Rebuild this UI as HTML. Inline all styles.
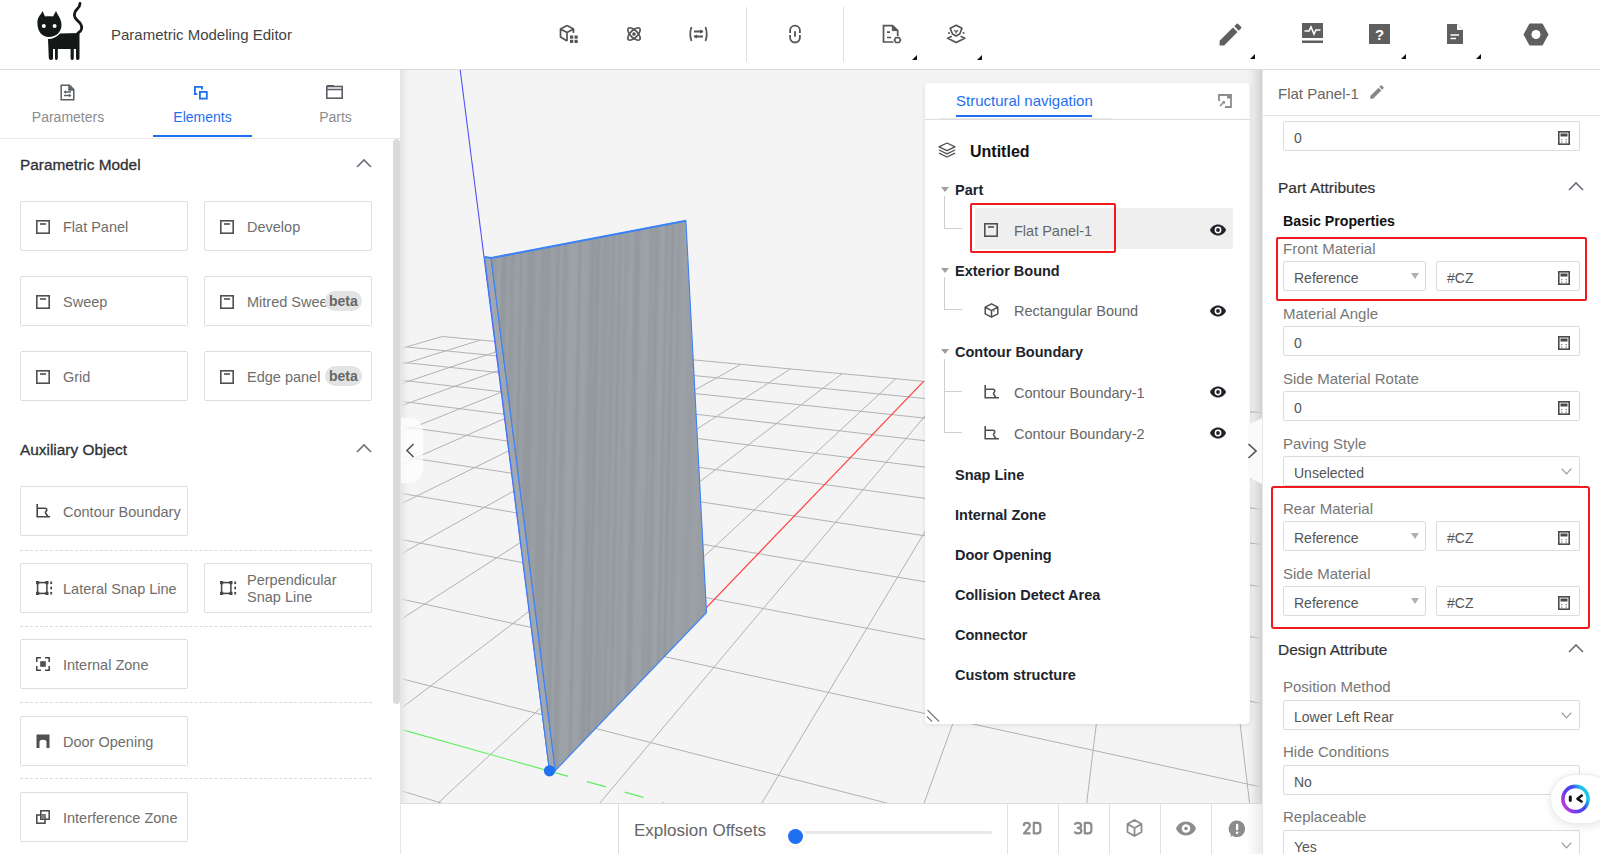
<!DOCTYPE html>
<html><head><meta charset="utf-8">
<style>
*{box-sizing:border-box;margin:0;padding:0}
html,body{width:1600px;height:854px;overflow:hidden;background:#fff;font-family:"Liberation Sans",sans-serif;color:#333}
.abs{position:absolute}
#hdr{position:absolute;left:0;top:0;width:1600px;height:70px;background:#fff;border-bottom:1px solid #dcdcdc}
#left{position:absolute;left:0;top:70px;width:401px;height:784px;background:#fff;border-right:1px solid #e4e4e4}
#view{position:absolute;left:401px;top:70px;width:861px;height:784px;background:#f4f4f4;overflow:hidden}
#right{position:absolute;left:1262px;top:70px;width:338px;height:784px;background:#fff}
.btn{position:absolute;height:50px;border:1px solid #dedede;border-radius:2px;background:#fff;font-size:14.5px;color:#6e6e6e}
.btn .t{position:absolute;left:42px;top:17px;white-space:nowrap}
.btn svg{position:absolute;left:15px;top:18px}
.sec{position:absolute;left:20px;font-size:15.4px;color:#2c3038}
.dash{position:absolute;left:20px;width:352px;border-top:1px dashed #dadada}
.beta{position:absolute;top:14px;height:20px;padding:0 4px;border-radius:10px;background:#e3e3e3;color:#666;font-weight:bold;font-size:14px;line-height:20px}
.lab{position:absolute;left:21px;font-size:15px;color:#777;white-space:nowrap}
.sect{position:absolute;left:16px;font-size:15.5px;color:#333;white-space:nowrap;-webkit-text-stroke:0.2px #333}
.inp{position:absolute;height:30px;border:1px solid #dcdcdc;border-radius:2px;background:#fff}
.inp .v{position:absolute;left:10px;top:7.5px;font-size:14px;color:#555;white-space:nowrap}
.tab{position:absolute;top:0;width:133px;height:68px;text-align:center;font-size:14.5px;color:#8c8c8c}
</style></head><body>
<div id="hdr">
<svg class="abs" style="left:0px;top:0px" width="90" height="64" viewBox="0 0 90 64">
<path fill="#141817" d="M37.5 24 C37 19 39 16 41 14 L42.5 11 L45 16.5 C47 16 51 16 53 16.5 L56 11 L58 15 C60 18 61.5 21 61.5 25 C61.5 32 56 37 49 37 C42 37 37.5 31 37.5 24 Z"/>
<path fill="#141817" d="M48 39 C53 39 57 37 60 33.5 L79.5 33 L79.5 58.5 Q79 60.3 77.5 60 Q76 59.8 76 58 L76 49 L73.8 49 L73.8 58.5 Q73 60.3 72 60 Q70.6 59.8 70.6 58 L70.6 49 L57.8 49 L57.8 58.5 Q57 60.3 56 60 Q55 59.8 55 58 L55 49 L53 49 L53 58.5 Q52 60.5 50.5 60 Q48.8 59.5 48.8 58 Z"/>
<path fill="none" stroke="#141817" stroke-width="2.8" stroke-linecap="round" d="M78 33 C82 31 83 27 80 23 C76 19 73 17 75 12 C76 9 80 8 80 3.5"/>
<circle cx="43.8" cy="26" r="2" fill="#fff"/><circle cx="54.6" cy="26" r="2" fill="#fff"/>
</svg>
<div class="abs" style="left:111px;top:26px;font-size:15px;color:#444;white-space:nowrap">Parametric Modeling Editor</div>
<!-- icons -->
<svg class="abs" style="left:559px;top:24px" width="21" height="21" viewBox="0 0 21 21" fill="none" stroke="#555" stroke-width="1.7" stroke-linejoin="round">
<path d="M8 1.5 L1.5 5 L1.5 13 L8 17 M8 1.5 L14.5 5 L8 8.5 L1.5 5 M8 8.5 L8 17 M14.5 5 L14.5 9"/>
<g fill="#555" stroke="none"><rect x="11" y="11.5" width="3.2" height="3.2"/><rect x="15.5" y="11.5" width="3.2" height="3.2"/><rect x="11" y="15.8" width="3.2" height="3.2"/><rect x="15.5" y="15.8" width="3.2" height="3.2"/></g>
</svg>
<svg class="abs" style="left:625px;top:25px" width="18" height="18" viewBox="0 0 18 18" fill="none" stroke="#555" stroke-width="1.7">
<ellipse cx="9" cy="9" rx="8" ry="3.6" transform="rotate(45 9 9)"/><ellipse cx="9" cy="9" rx="8" ry="3.6" transform="rotate(-45 9 9)"/><circle cx="9" cy="9" r="1" fill="#555"/>
</svg>
<svg class="abs" style="left:688px;top:26px" width="21" height="16" viewBox="0 0 21 16" fill="none" stroke="#555" stroke-width="1.8">
<path d="M3.5 1 Q1 8 3.5 15 M17.5 1 Q20 8 17.5 15"/><path d="M6 5.5 L15 5.5 M6 10.5 L15 10.5"/><path fill="#555" stroke="none" d="M12 3.5 L15.5 5.5 L12 7.5 Z M9 8.5 L5.5 10.5 L9 12.5 Z"/>
</svg>
<div class="abs" style="left:746px;top:7px;width:1px;height:55px;background:#e0e0e0"></div>
<svg class="abs" style="left:788px;top:24px" width="14" height="20" viewBox="0 0 14 20" fill="none" stroke="#555" stroke-width="1.8"><path d="M2.1 9 L2.1 6.6 A4.9 4.9 0 0 1 11.9 6.6 L11.9 9 M2.1 11 L2.1 13.6 A4.9 4.9 0 0 0 11.9 13.6 L11.9 11 M7 7.2 L7 12.8"/></svg>
<div class="abs" style="left:843px;top:7px;width:1px;height:55px;background:#e0e0e0"></div>
<svg class="abs" style="left:882px;top:24px" width="20" height="20" viewBox="0 0 20 20" fill="none" stroke="#555" stroke-width="1.7"><path d="M11.5 18 L1.5 18 L1.5 1.6 L10.5 1.6 L15.7 6.5 L15.7 12"/><path d="M10.3 2 L10.3 6.6 L15.3 6.6 Z" fill="#555" stroke-width="1"/><path d="M5 8.2 L8 8.2 M5 13.5 L9.2 13.5"/><path d="M13.9 13.6 L17.1 13.6 L18.6 16 L17.1 18.5 L13.9 18.5 L12.4 16 Z" stroke-width="1.6"/></svg>
<svg class="abs" style="left:946px;top:24px" width="20" height="20" viewBox="0 0 20 20" fill="none" stroke="#555" stroke-width="1.7" stroke-linejoin="round"><path d="M10.2 1.3 L16 4.2 L13.7 10 L10.1 12 L6.5 10 L4.2 4.2 Z"/><path d="M8.3 6.3 L10.2 7.8 L12.1 6.3 M10.2 7.8 L10.2 9.6" stroke-width="1.3"/><circle cx="3" cy="9" r="1" fill="#555" stroke="none"/><circle cx="17.5" cy="9" r="1" fill="#555" stroke="none"/><path d="M5.8 12.3 L1.6 14.3 L10.2 18.4 L18.8 14.3 L14.6 12.3"/></svg>
<svg class="abs" style="left:912px;top:55px" width="5" height="5"><path d="M5 0 L5 5 L0 5 Z" fill="#111"/></svg>
<svg class="abs" style="left:977px;top:55px" width="5" height="5"><path d="M5 0 L5 5 L0 5 Z" fill="#111"/></svg>
<!-- right icons -->
<svg class="abs" style="left:1216px;top:20px" width="29" height="29" viewBox="0 0 24 24"><path fill="#5f5f5f" d="M3 17.25V21h3.75L17.81 9.94l-3.75-3.75L3 17.25zM20.71 7.04a1 1 0 0 0 0-1.41l-2.34-2.34a1 1 0 0 0-1.41 0l-1.83 1.83 3.75 3.75 1.83-1.83z"/></svg>
<svg class="abs" style="left:1301px;top:23px" width="23" height="21" viewBox="0 0 23 21"><rect x="1" y="0" width="21" height="15" fill="#5f5f5f"/><rect x="1" y="17.5" width="21" height="2.5" fill="#5f5f5f"/><path d="M3.5 8 L8 8 L10 4 L13 11 L15 7 L19.5 7" fill="none" stroke="#fff" stroke-width="1.6"/></svg>
<svg class="abs" style="left:1369px;top:24px" width="21" height="21" viewBox="0 0 21 21"><rect x="0" y="0" width="21" height="20" fill="#5f5f5f"/><text x="10.5" y="16" text-anchor="middle" font-family="Liberation Sans" font-weight="bold" font-size="15" fill="#fff">?</text></svg>
<svg class="abs" style="left:1447px;top:24px" width="16" height="20" viewBox="0 0 16 20"><path d="M0 0 L10 0 L16 6 L16 20 L0 20 Z" fill="#5f5f5f"/><path d="M10 0 L10 6 L16 6" fill="#fff"/><path d="M3.5 11 L12 11 M3.5 14.5 L9 14.5" stroke="#fff" stroke-width="1.5"/></svg>
<svg class="abs" style="left:1523px;top:23px" width="26" height="23" viewBox="0 0 26 23"><path d="M6.5 0.5 L19.5 0.5 L25.5 11.5 L19.5 22.5 L6.5 22.5 L0.5 11.5 Z" fill="#5f5f5f"/><circle cx="13" cy="11.5" r="4.5" fill="#fff"/></svg>
<svg class="abs" style="left:1250px;top:54px" width="5" height="5"><path d="M5 0 L5 5 L0 5 Z" fill="#111"/></svg>
<svg class="abs" style="left:1401px;top:54px" width="5" height="5"><path d="M5 0 L5 5 L0 5 Z" fill="#111"/></svg>
<svg class="abs" style="left:1476px;top:54px" width="5" height="5"><path d="M5 0 L5 5 L0 5 Z" fill="#111"/></svg>
</div>
<div id="left">
<svg class="abs" style="left:60px;top:14px" width="15" height="17" viewBox="0 0 15 17" fill="none" stroke="#5a5e66" stroke-width="1.5"><path d="M1.2 1.2 L9.5 1.2 L13.8 5.5 L13.8 15.8 L1.2 15.8 Z"/><path d="M9 1.5 L9 6 L13.5 6" fill="#5a5e66"/><path d="M4.5 8 L11 8 M4 11.5 L10.5 11.5"/><path d="M3.5 8 L6 6.3 L6 9.7 Z M11.5 11.5 L9 9.8 L9 13.2 Z" fill="#5a5e66" stroke="none"/></svg>
<div class="abs" style="left:0;top:39px;width:136px;text-align:center;font-size:14px;color:#8c8c8c">Parameters</div>
<svg class="abs" style="left:193px;top:15px" width="16" height="16" viewBox="0 0 16 16" fill="none" stroke="#1f6ff2" stroke-width="1.8"><path d="M9 3.8 L9 1.9 L1.9 1.9 L1.9 9.2 L3.6 9.2" stroke-linecap="round"/><rect x="6.9" y="6.9" width="6.9" height="6.7" fill="none"/></svg>
<div class="abs" style="left:153px;top:39px;width:99px;text-align:center;font-size:14px;color:#1f6ff2">Elements</div>
<div class="abs" style="left:153px;top:65px;width:99px;height:2px;background:#1f6ff2"></div>
<svg class="abs" style="left:326px;top:15px" width="17" height="14" viewBox="0 0 17 14" fill="none" stroke="#5a5e66" stroke-width="1.6"><rect x="0.8" y="1.5" width="15.4" height="11.7"/><path d="M0.8 4.5 L16.2 4.5 M1 0.8 L8 0.8"/></svg>
<div class="abs" style="left:270px;top:39px;width:131px;text-align:center;font-size:14px;color:#8c8c8c">Parts</div>
<div class="abs" style="left:0;top:68px;width:400px;height:1px;background:#e8eaeb"></div>
<div class="abs" style="left:393px;top:69px;width:7px;height:565px;background:#dadada;border-radius:3.5px"></div>
<div class="sec" style="top:86px;font-weight:normal;-webkit-text-stroke:0.3px #333">Parametric Model</div>
<svg class="abs" style="left:356px;top:88px" width="16" height="10" viewBox="0 0 16 10"><path d="M1 9 L8 2 L15 9" fill="none" stroke="#6b7079" stroke-width="1.6"/></svg>
<div class="btn" style="left:20px;top:131px;width:168px"><svg width="14" height="14" viewBox="0 0 14 14"><rect x="0.8" y="0.8" width="12.4" height="12.4" fill="none" stroke="#505050" stroke-width="1.6"/><rect x="4" y="3.2" width="6" height="1.6" fill="#505050"/></svg><div class="t">Flat Panel</div></div>
<div class="btn" style="left:204px;top:131px;width:168px"><svg width="14" height="14" viewBox="0 0 14 14"><rect x="0.8" y="0.8" width="12.4" height="12.4" fill="none" stroke="#505050" stroke-width="1.6"/><rect x="4" y="3.2" width="6" height="1.6" fill="#505050"/></svg><div class="t">Develop</div></div>
<div class="btn" style="left:20px;top:206px;width:168px"><svg width="14" height="14" viewBox="0 0 14 14"><rect x="0.8" y="0.8" width="12.4" height="12.4" fill="none" stroke="#505050" stroke-width="1.6"/><rect x="4" y="3.2" width="6" height="1.6" fill="#505050"/></svg><div class="t">Sweep</div></div>
<div class="btn" style="left:204px;top:206px;width:168px"><svg width="14" height="14" viewBox="0 0 14 14"><rect x="0.8" y="0.8" width="12.4" height="12.4" fill="none" stroke="#505050" stroke-width="1.6"/><rect x="4" y="3.2" width="6" height="1.6" fill="#505050"/></svg><div class="t">Mitred Swe<span style="position:relative">e</span></div><div class="beta" style="left:120px">beta</div></div>
<div class="btn" style="left:20px;top:281px;width:168px"><svg width="14" height="14" viewBox="0 0 14 14"><rect x="0.8" y="0.8" width="12.4" height="12.4" fill="none" stroke="#505050" stroke-width="1.6"/><rect x="4" y="3.2" width="6" height="1.6" fill="#505050"/></svg><div class="t">Grid</div></div>
<div class="btn" style="left:204px;top:281px;width:168px"><svg width="14" height="14" viewBox="0 0 14 14"><rect x="0.8" y="0.8" width="12.4" height="12.4" fill="none" stroke="#505050" stroke-width="1.6"/><rect x="4" y="3.2" width="6" height="1.6" fill="#505050"/></svg><div class="t">Edge panel</div><div class="beta" style="left:120px">beta</div></div>
<div class="sec" style="top:371px;-webkit-text-stroke:0.3px #333">Auxiliary Object</div>
<svg class="abs" style="left:356px;top:373px" width="16" height="10" viewBox="0 0 16 10"><path d="M1 9 L8 2 L15 9" fill="none" stroke="#6b7079" stroke-width="1.6"/></svg>
<div class="btn" style="left:20px;top:416px;width:168px"><svg style="top:17px;left:14.5px" width="14" height="14" viewBox="0 0 14 14" fill="none" stroke="#454545" stroke-width="1.6"><path d="M1.2 0 L1.2 12.8 L14 12.8 M1.2 4.3 L9 4.3 Q10.8 4.3 10.8 6 Q10.8 7 9.8 7.6 Q9 8.3 10.2 10 L12 12.8"/></svg><div class="t">Contour Boundary</div></div>
<div class="dash" style="top:480px"></div>
<div class="btn" style="left:20px;top:493px;width:168px"><svg style="top:17px;left:14.5px" width="17" height="14" viewBox="0 0 17 14"><rect x="1.6" y="1.6" width="9.3" height="10.8" fill="none" stroke="#454545" stroke-width="1.5"/><g fill="#454545"><rect x="0" y="0" width="3.2" height="3.2"/><rect x="9.3" y="0" width="3.2" height="3.2"/><rect x="0" y="10.8" width="3.2" height="3.2"/><rect x="9.3" y="10.8" width="3.2" height="3.2"/><rect x="14.3" y="0.5" width="1.8" height="2.6"/><rect x="14.3" y="5.7" width="1.8" height="2.6"/><rect x="14.3" y="10.9" width="1.8" height="2.6"/></g></svg><div class="t">Lateral Snap Line</div></div>
<div class="btn" style="left:204px;top:493px;width:168px"><svg style="top:17px;left:14.5px" width="17" height="14" viewBox="0 0 17 14"><rect x="1.6" y="1.6" width="9.3" height="10.8" fill="none" stroke="#454545" stroke-width="1.5"/><g fill="#454545"><rect x="0" y="0" width="3.2" height="3.2"/><rect x="9.3" y="0" width="3.2" height="3.2"/><rect x="0" y="10.8" width="3.2" height="3.2"/><rect x="9.3" y="10.8" width="3.2" height="3.2"/><rect x="14.3" y="0.5" width="1.8" height="2.6"/><rect x="14.3" y="5.7" width="1.8" height="2.6"/><rect x="14.3" y="10.9" width="1.8" height="2.6"/></g></svg><div class="t" style="top:8px;line-height:17px">Perpendicular<br>Snap Line</div></div>
<div class="dash" style="top:556px"></div>
<div class="btn" style="left:20px;top:569px;width:168px"><svg style="top:17px;left:14.5px" width="14" height="14" viewBox="0 0 14 14" fill="none" stroke="#454545" stroke-width="1.5"><path d="M0.8 5 L0.8 0.8 L5 0.8 M9 0.8 L13.2 0.8 L13.2 5 M13.2 9 L13.2 13.2 L9 13.2 M5 13.2 L0.8 13.2 L0.8 9"/><rect x="4.2" y="4.2" width="5.6" height="5.6" fill="#505050" stroke="none"/></svg><div class="t">Internal Zone</div></div>
<div class="dash" style="top:632px"></div>
<div class="btn" style="left:20px;top:646px;width:168px"><svg style="top:17px;left:14.5px" width="14" height="14" viewBox="0 0 14 14"><path d="M0.5 0.5 L13.5 0.5 L13.5 14 L10.5 14 L10.5 8 Q10.5 5.8 7 5.8 Q3.5 5.8 3.5 8 L3.5 14 L0.5 14 Z" fill="#505050"/></svg><div class="t">Door Opening</div></div>
<div class="dash" style="top:708px"></div>
<div class="btn" style="left:20px;top:722px;width:168px"><svg style="top:17px;left:14.5px" width="14" height="14" viewBox="0 0 14 14" fill="none" stroke="#454545" stroke-width="1.5"><rect x="0.8" y="5" width="8.2" height="8.2"/><rect x="4.8" y="0.8" width="8.4" height="8.4"/><rect x="5" y="5" width="4" height="4" fill="#808080" stroke="none"/></svg><div class="t">Interference Zone</div></div>
</div>
<div id="view">
<svg class="abs" style="left:0;top:0" width="861" height="784" viewBox="401 70 861 784">
<path d="M622.1 859.0L396.0 789.1 M1105.0 859.0L396.0 677.3 M1267.0 788.3L396.0 597.9 M1267.0 704.5L396.0 538.5 M1267.0 639.5L396.0 492.5 M1267.0 587.6L396.0 455.7 M1267.0 545.3L396.0 425.7 M1267.0 510.0L396.0 400.7 M1267.0 480.2L396.0 379.6 M1267.0 454.7L396.0 361.6 M1267.0 432.6L406.3 346.9 M1267.0 413.3L442.2 336.5 M1256.2 859.0L1202.5 407.3 M1079.9 859.0L1135.5 401.1 M903.9 859.0L1071.6 395.1 M728.2 859.0L1010.4 389.4 M552.8 859.0L951.9 384.0 M396.0 842.0L895.8 378.8 M396.0 712.3L842.1 373.7 M396.0 622.5L790.5 368.9 M396.0 556.7L740.9 364.3 M396.0 506.3L693.3 359.9 M396.0 466.5L647.5 355.6 M396.0 434.3L603.4 351.5 M396.0 407.7L560.9 347.6 M396.0 385.4L519.9 343.8 M396.0 366.3L480.4 340.1 M396.0 349.9L442.2 336.5" stroke="#b2b2b2" stroke-width="1" fill="none"/>
<path d="M549.5 771.1L923.6 381.3" stroke="#ff4040" stroke-width="1.2"/>
<path d="M549.5 771.1L396.0 728.0" stroke="#5def5d" stroke-width="1.1"/>
<path d="M549.5 771.1L863.3 859.0" stroke="#5def5d" stroke-width="1.1" stroke-dasharray="19.5 19.5"/>
<path d="M460.2 70 L549.5 771" stroke="#5050ff" stroke-width="1.1"/>
<defs>
<linearGradient id="wood" x1="0" y1="0" x2="1" y2="0.05"><stop offset="0.000" stop-color="#989da4"/><stop offset="0.014" stop-color="#959aa1"/><stop offset="0.029" stop-color="#999ea5"/><stop offset="0.043" stop-color="#9da2a9"/><stop offset="0.057" stop-color="#93989f"/><stop offset="0.071" stop-color="#9499a0"/><stop offset="0.086" stop-color="#9ba0a7"/><stop offset="0.100" stop-color="#9499a0"/><stop offset="0.114" stop-color="#989da4"/><stop offset="0.129" stop-color="#9ca1a8"/><stop offset="0.143" stop-color="#93989f"/><stop offset="0.157" stop-color="#9ba0a7"/><stop offset="0.171" stop-color="#969ba2"/><stop offset="0.186" stop-color="#93989f"/><stop offset="0.200" stop-color="#9499a0"/><stop offset="0.214" stop-color="#999ea5"/><stop offset="0.229" stop-color="#999ea5"/><stop offset="0.243" stop-color="#9499a0"/><stop offset="0.257" stop-color="#969ba2"/><stop offset="0.271" stop-color="#9499a0"/><stop offset="0.286" stop-color="#9ba0a7"/><stop offset="0.300" stop-color="#999ea5"/><stop offset="0.314" stop-color="#93989f"/><stop offset="0.329" stop-color="#9ca1a8"/><stop offset="0.343" stop-color="#9499a0"/><stop offset="0.357" stop-color="#969ba2"/><stop offset="0.371" stop-color="#9da2a9"/><stop offset="0.386" stop-color="#9da2a9"/><stop offset="0.400" stop-color="#9ca1a8"/><stop offset="0.414" stop-color="#93989f"/><stop offset="0.429" stop-color="#9ca1a8"/><stop offset="0.443" stop-color="#9ca1a8"/><stop offset="0.457" stop-color="#999ea5"/><stop offset="0.471" stop-color="#93989f"/><stop offset="0.486" stop-color="#969ba2"/><stop offset="0.500" stop-color="#93989f"/><stop offset="0.514" stop-color="#9ba0a7"/><stop offset="0.529" stop-color="#959aa1"/><stop offset="0.543" stop-color="#979ca3"/><stop offset="0.557" stop-color="#999ea5"/><stop offset="0.571" stop-color="#959aa1"/><stop offset="0.586" stop-color="#9ba0a7"/><stop offset="0.600" stop-color="#9499a0"/><stop offset="0.614" stop-color="#9ca1a8"/><stop offset="0.629" stop-color="#979ca3"/><stop offset="0.643" stop-color="#9ba0a7"/><stop offset="0.657" stop-color="#9da2a9"/><stop offset="0.671" stop-color="#959aa1"/><stop offset="0.686" stop-color="#9499a0"/><stop offset="0.700" stop-color="#9ca1a8"/><stop offset="0.714" stop-color="#9ca1a8"/><stop offset="0.729" stop-color="#9da2a9"/><stop offset="0.743" stop-color="#969ba2"/><stop offset="0.757" stop-color="#989da4"/><stop offset="0.771" stop-color="#9499a0"/><stop offset="0.786" stop-color="#9ba0a7"/><stop offset="0.800" stop-color="#9ea3aa"/><stop offset="0.814" stop-color="#9499a0"/><stop offset="0.829" stop-color="#9ca1a8"/><stop offset="0.843" stop-color="#93989f"/><stop offset="0.857" stop-color="#9ca1a8"/><stop offset="0.871" stop-color="#969ba2"/><stop offset="0.886" stop-color="#9a9fa6"/><stop offset="0.900" stop-color="#9da2a9"/><stop offset="0.914" stop-color="#9ba0a7"/><stop offset="0.929" stop-color="#999ea5"/><stop offset="0.943" stop-color="#989da4"/><stop offset="0.957" stop-color="#9a9fa6"/><stop offset="0.971" stop-color="#9ca1a8"/><stop offset="0.986" stop-color="#9a9fa6"/><stop offset="1.000" stop-color="#989da4"/></linearGradient>
</defs>
<path d="M484.6 257 L491.1 258 L555.3 770.6 L549.5 771 Z" fill="#a2a7ad" stroke="#3a82f6" stroke-width="1.1" stroke-linejoin="round"/>
<path d="M491.1 258 L685.9 220.7 L706.5 612.5 L555.3 770.6 Z" fill="url(#wood)" stroke="#3a82f6" stroke-width="1.1" stroke-linejoin="round"/>
<path d="M485 257 L491.1 258 L685.9 220.7" fill="none" stroke="#3a82f6" stroke-width="2"/>
<circle cx="549.5" cy="770.8" r="5.6" fill="#1f73f0"/>
</svg>
<div class="abs" style="left:0;top:0;width:8px;height:784px;background:linear-gradient(90deg,#e6e6e6,rgba(244,244,244,0))"></div>
<div class="abs" style="left:851px;top:0;width:10px;height:784px;background:linear-gradient(270deg,#e2e2e2,rgba(244,244,244,0))"></div>
</div>
<div class="abs" style="left:925px;top:83px;width:325px;height:641px;background:#fff;border-radius:4px;box-shadow:0 1px 4px rgba(0,0,0,0.10)">
<div class="abs" style="left:31px;top:9px;font-size:15px;color:#1f6ff2;white-space:nowrap">Structural navigation</div>
<div class="abs" style="left:14px;top:35px;width:172px;height:2px;background:#e8e8e8"></div>
<div class="abs" style="left:31px;top:32px;width:136px;height:2px;background:#1f6ff2"></div>
<div class="abs" style="left:0;top:36px;width:325px;height:1px;background:#dedede"></div>
<svg class="abs" style="left:293px;top:11px" width="14" height="14" viewBox="0 0 14 14"><path d="M1 7 L1 1 L13 1 L13 13 L7 13" fill="none" stroke="#8c8c8c" stroke-width="1.8"/><rect x="9" y="1" width="4" height="3.5" fill="#8c8c8c"/><path d="M2.5 11.5 L6 8" stroke="#8c8c8c" stroke-width="1.6" stroke-linecap="round"/><path d="M3.8 7.2 L6.8 7.2 L6.8 10.2 Z" fill="#8c8c8c"/></svg>
<svg class="abs" style="left:13px;top:59px" width="18" height="16" viewBox="0 0 18 16" fill="none" stroke="#505050" stroke-width="1.3" stroke-linejoin="round"><path d="M9 1 L17 4.8 L9 8.6 L1 4.8 Z"/><path d="M1 8 L9 11.8 L17 8"/><path d="M1 11.2 L9 15 L17 11.2"/></svg>
<div class="abs" style="left:45px;top:60px;font-size:16px;font-weight:bold;color:#111">Untitled</div>
<svg class="abs" style="left:16px;top:104px" width="8" height="5" viewBox="0 0 8 5"><path d="M0 0 L8 0 L4 5 Z" fill="#a0a0a0"/></svg><div class="abs" style="left:30px;top:99px;font-size:14.5px;font-weight:bold;color:#20242c;white-space:nowrap">Part</div>
<div class="abs" style="left:19px;top:113px;width:1px;height:33px;background:#cfcfcf"></div><div class="abs" style="left:19px;top:145px;width:18px;height:1px;background:#cfcfcf"></div>
<div class="abs" style="left:50px;top:125px;width:258px;height:41px;background:#efefef"></div>
<div class="abs" style="left:45px;top:120px;width:146px;height:50px;border:2px solid #f0191e;border-radius:2px"></div>
<div class="abs" style="left:59px;top:140px"><svg width="14" height="14" viewBox="0 0 14 14"><rect x="0.8" y="0.8" width="12.4" height="12.4" fill="none" stroke="#505050" stroke-width="1.6"/><rect x="4" y="3.2" width="6" height="1.6" fill="#505050"/></svg></div><div class="abs" style="left:89px;top:140px;font-size:14.5px;color:#666;white-space:nowrap">Flat Panel-1</div>
<svg class="abs" style="left:285px;top:141px" width="16" height="12" viewBox="0 0 16 12"><path d="M8 0.5 C4.2 0.5 1.3 2.9 0 6 C1.3 9.1 4.2 11.5 8 11.5 C11.8 11.5 14.7 9.1 16 6 C14.7 2.9 11.8 0.5 8 0.5 Z" fill="#20242a"/><circle cx="8" cy="6" r="3.4" fill="#fff"/><circle cx="8" cy="6" r="1.9" fill="#20242a"/></svg><svg class="abs" style="left:16px;top:185px" width="8" height="5" viewBox="0 0 8 5"><path d="M0 0 L8 0 L4 5 Z" fill="#a0a0a0"/></svg><div class="abs" style="left:30px;top:180px;font-size:14.5px;font-weight:bold;color:#20242c;white-space:nowrap">Exterior Bound</div>
<div class="abs" style="left:19px;top:194px;width:1px;height:33px;background:#cfcfcf"></div><div class="abs" style="left:19px;top:226px;width:18px;height:1px;background:#cfcfcf"></div>
<div class="abs" style="left:59px;top:220px"><svg width="15" height="15" viewBox="0 0 15 15" fill="none" stroke="#505050" stroke-width="1.5" stroke-linejoin="round"><path d="M7.5 0.8 L13.8 4.2 L13.8 10.8 L7.5 14.2 L1.2 10.8 L1.2 4.2 Z M1.2 4.2 L7.5 7.6 L13.8 4.2 M7.5 7.6 L7.5 14.2"/><path d="M7.5 7.6 L10.5 6 L10.5 9" fill="#808080" stroke="none"/></svg></div><div class="abs" style="left:89px;top:220px;font-size:14.5px;color:#666;white-space:nowrap">Rectangular Bound</div>
<svg class="abs" style="left:285px;top:222px" width="16" height="12" viewBox="0 0 16 12"><path d="M8 0.5 C4.2 0.5 1.3 2.9 0 6 C1.3 9.1 4.2 11.5 8 11.5 C11.8 11.5 14.7 9.1 16 6 C14.7 2.9 11.8 0.5 8 0.5 Z" fill="#20242a"/><circle cx="8" cy="6" r="3.4" fill="#fff"/><circle cx="8" cy="6" r="1.9" fill="#20242a"/></svg><svg class="abs" style="left:16px;top:266px" width="8" height="5" viewBox="0 0 8 5"><path d="M0 0 L8 0 L4 5 Z" fill="#a0a0a0"/></svg><div class="abs" style="left:30px;top:261px;font-size:14.5px;font-weight:bold;color:#20242c;white-space:nowrap">Contour Boundary</div>
<div class="abs" style="left:19px;top:276px;width:1px;height:74px;background:#cfcfcf"></div><div class="abs" style="left:19px;top:308px;width:18px;height:1px;background:#cfcfcf"></div><div class="abs" style="left:19px;top:349px;width:18px;height:1px;background:#cfcfcf"></div>
<div class="abs" style="left:59px;top:302px"><svg width="15" height="14" viewBox="0 0 15 14" fill="none" stroke="#505050" stroke-width="1.6"><path d="M1.2 0 L1.2 12.8 L15 12.8 M1.2 4.3 L9 4.3 Q10.8 4.3 10.8 6 Q10.8 7 9.8 7.6 Q9 8.3 10.2 10 L12 12.8"/></svg></div><div class="abs" style="left:89px;top:302px;font-size:14.5px;color:#666;white-space:nowrap">Contour Boundary-1</div>
<svg class="abs" style="left:285px;top:303px" width="16" height="12" viewBox="0 0 16 12"><path d="M8 0.5 C4.2 0.5 1.3 2.9 0 6 C1.3 9.1 4.2 11.5 8 11.5 C11.8 11.5 14.7 9.1 16 6 C14.7 2.9 11.8 0.5 8 0.5 Z" fill="#20242a"/><circle cx="8" cy="6" r="3.4" fill="#fff"/><circle cx="8" cy="6" r="1.9" fill="#20242a"/></svg><div class="abs" style="left:59px;top:343px"><svg width="15" height="14" viewBox="0 0 15 14" fill="none" stroke="#505050" stroke-width="1.6"><path d="M1.2 0 L1.2 12.8 L15 12.8 M1.2 4.3 L9 4.3 Q10.8 4.3 10.8 6 Q10.8 7 9.8 7.6 Q9 8.3 10.2 10 L12 12.8"/></svg></div><div class="abs" style="left:89px;top:343px;font-size:14.5px;color:#666;white-space:nowrap">Contour Boundary-2</div>
<svg class="abs" style="left:285px;top:344px" width="16" height="12" viewBox="0 0 16 12"><path d="M8 0.5 C4.2 0.5 1.3 2.9 0 6 C1.3 9.1 4.2 11.5 8 11.5 C11.8 11.5 14.7 9.1 16 6 C14.7 2.9 11.8 0.5 8 0.5 Z" fill="#20242a"/><circle cx="8" cy="6" r="3.4" fill="#fff"/><circle cx="8" cy="6" r="1.9" fill="#20242a"/></svg><div class="abs" style="left:30px;top:384px;font-size:14.5px;font-weight:bold;color:#20242c;white-space:nowrap">Snap Line</div>
<div class="abs" style="left:30px;top:424px;font-size:14.5px;font-weight:bold;color:#20242c;white-space:nowrap">Internal Zone</div>
<div class="abs" style="left:30px;top:464px;font-size:14.5px;font-weight:bold;color:#20242c;white-space:nowrap">Door Opening</div>
<div class="abs" style="left:30px;top:504px;font-size:14.5px;font-weight:bold;color:#20242c;white-space:nowrap">Collision Detect Area</div>
<div class="abs" style="left:30px;top:544px;font-size:14.5px;font-weight:bold;color:#20242c;white-space:nowrap">Connector</div>
<div class="abs" style="left:30px;top:584px;font-size:14.5px;font-weight:bold;color:#20242c;white-space:nowrap">Custom structure</div>
<svg class="abs" style="left:-1px;top:623px" width="20" height="20" viewBox="0 0 20 20"><path d="M3.5 4 L15 15.5 M3 10.5 L8 15.5" stroke="#777" stroke-width="1.1"/></svg>
</div>

<div class="abs" style="left:401px;top:803px;width:861px;height:51px;background:#fff;border-top:1px solid #dedede"></div>
<div class="abs" style="left:618px;top:804px;width:1px;height:50px;background:#dedede"></div>
<div class="abs" style="left:634px;top:821px;font-size:17px;color:#666;white-space:nowrap">Explosion Offsets</div>
<div class="abs" style="left:795px;top:831px;width:197px;height:3px;background:#e8e8e8;border-radius:2px"></div>
<div class="abs" style="left:784px;top:825px;width:22px;height:22px;border-radius:11px;background:#fff;box-shadow:0 1px 3px rgba(0,0,0,0.08)"></div>
<div class="abs" style="left:787.5px;top:828.5px;width:15px;height:15px;border-radius:8px;background:#1f6ff2"></div>
<div class="abs" style="left:1007px;top:804px;width:1px;height:50px;background:#e2e2e2"></div>
<div class="abs" style="left:1058px;top:804px;width:1px;height:50px;background:#e2e2e2"></div>
<div class="abs" style="left:1109px;top:804px;width:1px;height:50px;background:#e2e2e2"></div>
<div class="abs" style="left:1160px;top:804px;width:1px;height:50px;background:#e2e2e2"></div>
<div class="abs" style="left:1211px;top:804px;width:1px;height:50px;background:#e2e2e2"></div>
<svg class="abs" style="left:1022px;top:821px" width="21" height="16" viewBox="0 0 24 18" fill="none" stroke="#8c8c8c" stroke-width="2.5" stroke-linejoin="round"><path d="M2.2 5.5 L2.2 4.5 Q2.2 2 5.5 2 Q9 2 9 4.8 Q9 6.5 7.3 8.2 L2.3 14 L9.8 14"/><path d="M13.5 2 L13.5 14 L17.5 14 Q21 14 21 10.5 L21 5.5 Q21 2 17.5 2 Z"/></svg>
<svg class="abs" style="left:1073px;top:821px" width="21" height="16" viewBox="0 0 24 18" fill="none" stroke="#8c8c8c" stroke-width="2.5" stroke-linejoin="round"><path d="M2.2 4.2 Q2.5 2 5.5 2 Q9.3 2 9.3 5 Q9.3 7.8 5.5 7.8 Q9.6 7.8 9.6 10.9 Q9.6 14 5.7 14 Q2.3 14 2 11.6"/><path d="M13.5 2 L13.5 14 L17.5 14 Q21 14 21 10.5 L21 5.5 Q21 2 17.5 2 Z"/></svg>
<svg class="abs" style="left:1126px;top:819px" width="17" height="18" viewBox="0 0 17 18" fill="none" stroke="#8c8c8c" stroke-width="1.8" stroke-linejoin="round"><path d="M8.5 1 L15.5 5 L15.5 13 L8.5 17 L1.5 13 L1.5 5 Z M1.5 5 L8.5 9 L15.5 5 M8.5 9 L8.5 17"/></svg>
<svg class="abs" style="left:1176px;top:821px" width="20" height="15" viewBox="0 0 20 15"><path d="M10 0.5 C5.2 0.5 1.6 3.5 0 7.5 C1.6 11.5 5.2 14.5 10 14.5 C14.8 14.5 18.4 11.5 20 7.5 C18.4 3.5 14.8 0.5 10 0.5 Z" fill="#8c8c8c"/><circle cx="10" cy="7.5" r="4.3" fill="#fff"/><circle cx="10" cy="7.5" r="1.8" fill="#8c8c8c"/></svg>
<svg class="abs" style="left:1228px;top:820px" width="18" height="18" viewBox="0 0 18 18"><path d="M9 0.5 A8.3 8.3 0 1 1 4 15.6 L2.5 17.5 L2.8 14.3 A8.3 8.3 0 0 1 9 0.5 Z" fill="#8c8c8c"/><rect x="8" y="3.8" width="2.2" height="6.5" rx="1" fill="#fff"/><circle cx="9.1" cy="12.8" r="1.3" fill="#fff"/></svg>
<div class="abs" style="left:401px;top:418px;width:22px;height:65px;background:rgba(255,255,255,0.75);border-radius:0 14px 14px 0"></div>
<svg class="abs" style="left:405px;top:443px" width="10" height="15" viewBox="0 0 10 15"><path d="M8.5 1 L2 7.5 L8.5 14" fill="none" stroke="#555" stroke-width="1.6"/></svg>
<div class="abs" style="left:1246px;top:70px;width:16px;height:784px;background:linear-gradient(90deg,rgba(0,0,0,0),rgba(0,0,0,0.075))"></div>
<svg class="abs" style="left:1250px;top:418px" width="12" height="66" viewBox="0 0 12 66"><path d="M0 6 L12 0 L12 66 L0 60 Z" fill="#fafafa"/></svg>
<svg class="abs" style="left:1247px;top:443px" width="11" height="16" viewBox="0 0 11 16"><path d="M1.5 1 L9 8 L1.5 15" fill="none" stroke="#555" stroke-width="1.7"/></svg>
<div id="right">
<div class="abs" style="left:0;top:0;width:1px;height:784px;background:#e6e6e6"></div>
<div class="abs" style="left:16px;top:15px;font-size:15px;color:#666;white-space:nowrap">Flat Panel-1</div>
<svg class="abs" style="left:106px;top:13px" width="18" height="18" viewBox="0 0 24 24"><path fill="#888" d="M3 17.25V21h3.75L17.81 9.94l-3.75-3.75L3 17.25zM20.71 7.04a1 1 0 0 0 0-1.41l-2.34-2.34a1 1 0 0 0-1.41 0l-1.83 1.83 3.75 3.75 1.83-1.83z"/></svg>
<div class="abs" style="left:1px;top:45px;width:337px;height:1px;background:#e3e3e3"></div>
<div class="inp" style="left:21px;top:51px;width:297px"><div class="v">0</div></div>
<svg class="abs" style="left:296px;top:61px" width="12" height="14" viewBox="0 0 12 14"><rect x="0.8" y="0.8" width="10.4" height="12.4" fill="none" stroke="#4a4a4a" stroke-width="1.6"/><rect x="2.5" y="2.5" width="7" height="3" fill="#4a4a4a"/><rect x="3" y="8" width="1.3" height="1.3" fill="#888"/><rect x="7.5" y="8" width="1.3" height="1.3" fill="#888"/><rect x="3" y="10.5" width="1.3" height="1.3" fill="#888"/><rect x="7.5" y="10.5" width="1.3" height="1.3" fill="#888"/></svg><div class="sect" style="top:109px">Part Attributes</div>
<svg class="abs" style="left:306px;top:111px" width="16" height="10" viewBox="0 0 16 10"><path d="M1 9 L8 2 L15 9" fill="none" stroke="#6b7079" stroke-width="1.6"/></svg><div class="abs" style="left:21px;top:143px;font-size:14.2px;font-weight:bold;color:#111;white-space:nowrap">Basic Properties</div>
<div class="abs" style="left:14px;top:167px;width:311px;height:64px;border:2px solid #f0191e;border-radius:2px"></div>
<div class="lab" style="top:170px">Front Material</div>
<div class="inp" style="left:21px;top:191px;width:143px"><div class="v">Reference</div></div>
<svg class="abs" style="left:149px;top:203px" width="8" height="6" viewBox="0 0 8 6"><path d="M0 0 L8 0 L4 6 Z" fill="#b0b0b0"/></svg><div class="inp" style="left:174px;top:191px;width:144px"><div class="v">#CZ</div></div>
<svg class="abs" style="left:296px;top:201px" width="12" height="14" viewBox="0 0 12 14"><rect x="0.8" y="0.8" width="10.4" height="12.4" fill="none" stroke="#4a4a4a" stroke-width="1.6"/><rect x="2.5" y="2.5" width="7" height="3" fill="#4a4a4a"/><rect x="3" y="8" width="1.3" height="1.3" fill="#888"/><rect x="7.5" y="8" width="1.3" height="1.3" fill="#888"/><rect x="3" y="10.5" width="1.3" height="1.3" fill="#888"/><rect x="7.5" y="10.5" width="1.3" height="1.3" fill="#888"/></svg><div class="lab" style="top:235px">Material Angle</div>
<div class="inp" style="left:21px;top:256px;width:297px"><div class="v">0</div></div>
<svg class="abs" style="left:296px;top:266px" width="12" height="14" viewBox="0 0 12 14"><rect x="0.8" y="0.8" width="10.4" height="12.4" fill="none" stroke="#4a4a4a" stroke-width="1.6"/><rect x="2.5" y="2.5" width="7" height="3" fill="#4a4a4a"/><rect x="3" y="8" width="1.3" height="1.3" fill="#888"/><rect x="7.5" y="8" width="1.3" height="1.3" fill="#888"/><rect x="3" y="10.5" width="1.3" height="1.3" fill="#888"/><rect x="7.5" y="10.5" width="1.3" height="1.3" fill="#888"/></svg><div class="lab" style="top:300px">Side Material Rotate</div>
<div class="inp" style="left:21px;top:321px;width:297px"><div class="v">0</div></div>
<svg class="abs" style="left:296px;top:331px" width="12" height="14" viewBox="0 0 12 14"><rect x="0.8" y="0.8" width="10.4" height="12.4" fill="none" stroke="#4a4a4a" stroke-width="1.6"/><rect x="2.5" y="2.5" width="7" height="3" fill="#4a4a4a"/><rect x="3" y="8" width="1.3" height="1.3" fill="#888"/><rect x="7.5" y="8" width="1.3" height="1.3" fill="#888"/><rect x="3" y="10.5" width="1.3" height="1.3" fill="#888"/><rect x="7.5" y="10.5" width="1.3" height="1.3" fill="#888"/></svg><div class="lab" style="top:365px">Paving Style</div>
<div class="inp" style="left:21px;top:386px;width:297px"><div class="v">Unselected</div></div>
<svg class="abs" style="left:299px;top:398px" width="11" height="7" viewBox="0 0 11 7"><path d="M0.7 0.7 L5.5 5.8 L10.3 0.7" fill="none" stroke="#999" stroke-width="1.2"/></svg><div class="abs" style="left:9px;top:416px;width:319px;height:143px;border:2px solid #f0191e;border-radius:3px;background:#fff"></div>
<div class="lab" style="top:430px">Rear Material</div>
<div class="inp" style="left:21px;top:451px;width:143px"><div class="v">Reference</div></div>
<svg class="abs" style="left:149px;top:463px" width="8" height="6" viewBox="0 0 8 6"><path d="M0 0 L8 0 L4 6 Z" fill="#b0b0b0"/></svg><div class="inp" style="left:174px;top:451px;width:144px"><div class="v">#CZ</div></div>
<svg class="abs" style="left:296px;top:461px" width="12" height="14" viewBox="0 0 12 14"><rect x="0.8" y="0.8" width="10.4" height="12.4" fill="none" stroke="#4a4a4a" stroke-width="1.6"/><rect x="2.5" y="2.5" width="7" height="3" fill="#4a4a4a"/><rect x="3" y="8" width="1.3" height="1.3" fill="#888"/><rect x="7.5" y="8" width="1.3" height="1.3" fill="#888"/><rect x="3" y="10.5" width="1.3" height="1.3" fill="#888"/><rect x="7.5" y="10.5" width="1.3" height="1.3" fill="#888"/></svg><div class="lab" style="top:495px">Side Material</div>
<div class="inp" style="left:21px;top:516px;width:143px"><div class="v">Reference</div></div>
<svg class="abs" style="left:149px;top:528px" width="8" height="6" viewBox="0 0 8 6"><path d="M0 0 L8 0 L4 6 Z" fill="#b0b0b0"/></svg><div class="inp" style="left:174px;top:516px;width:144px"><div class="v">#CZ</div></div>
<svg class="abs" style="left:296px;top:526px" width="12" height="14" viewBox="0 0 12 14"><rect x="0.8" y="0.8" width="10.4" height="12.4" fill="none" stroke="#4a4a4a" stroke-width="1.6"/><rect x="2.5" y="2.5" width="7" height="3" fill="#4a4a4a"/><rect x="3" y="8" width="1.3" height="1.3" fill="#888"/><rect x="7.5" y="8" width="1.3" height="1.3" fill="#888"/><rect x="3" y="10.5" width="1.3" height="1.3" fill="#888"/><rect x="7.5" y="10.5" width="1.3" height="1.3" fill="#888"/></svg><div class="sect" style="top:571px">Design Attribute</div>
<svg class="abs" style="left:306px;top:573px" width="16" height="10" viewBox="0 0 16 10"><path d="M1 9 L8 2 L15 9" fill="none" stroke="#6b7079" stroke-width="1.6"/></svg><div class="lab" style="top:608px">Position Method</div>
<div class="inp" style="left:21px;top:630px;width:297px"><div class="v">Lower Left Rear</div></div>
<svg class="abs" style="left:299px;top:642px" width="11" height="7" viewBox="0 0 11 7"><path d="M0.7 0.7 L5.5 5.8 L10.3 0.7" fill="none" stroke="#999" stroke-width="1.2"/></svg><div class="lab" style="top:673px">Hide Conditions</div>
<div class="inp" style="left:21px;top:695px;width:297px"><div class="v">No</div></div>
<svg class="abs" style="left:299px;top:707px" width="11" height="7" viewBox="0 0 11 7"><path d="M0.7 0.7 L5.5 5.8 L10.3 0.7" fill="none" stroke="#999" stroke-width="1.2"/></svg><div class="lab" style="top:738px">Replaceable</div>
<div class="inp" style="left:21px;top:760px;width:297px"><div class="v">Yes</div></div>
<svg class="abs" style="left:299px;top:772px" width="11" height="7" viewBox="0 0 11 7"><path d="M0.7 0.7 L5.5 5.8 L10.3 0.7" fill="none" stroke="#999" stroke-width="1.2"/></svg><div class="abs" style="left:288px;top:704px;width:62px;height:50px;border-radius:25px;background:#fff;border:1px solid #e8ecf4;box-shadow:0 2px 10px rgba(0,0,0,0.10)"></div>
<svg class="abs" style="left:298px;top:714px" width="32" height="32" viewBox="0 0 32 32"><defs><linearGradient id="bg1" x1="0.05" y1="0.85" x2="0.9" y2="0.35"><stop offset="0" stop-color="#c23ad6"/><stop offset="0.35" stop-color="#6a3cf2"/><stop offset="0.7" stop-color="#3e46f0"/><stop offset="1" stop-color="#1ec6e6"/></linearGradient></defs><circle cx="15.5" cy="15" r="12.6" fill="#fff" stroke="url(#bg1)" stroke-width="3.6"/><rect x="8.8" y="11.5" width="3" height="6.5" rx="1.4" fill="#111"/><path d="M21.8 11.5 L17.5 14.8 L21.5 17.5" fill="none" stroke="#111" stroke-width="2.6" stroke-linecap="round" stroke-linejoin="round"/></svg>
</div>
</body></html>
